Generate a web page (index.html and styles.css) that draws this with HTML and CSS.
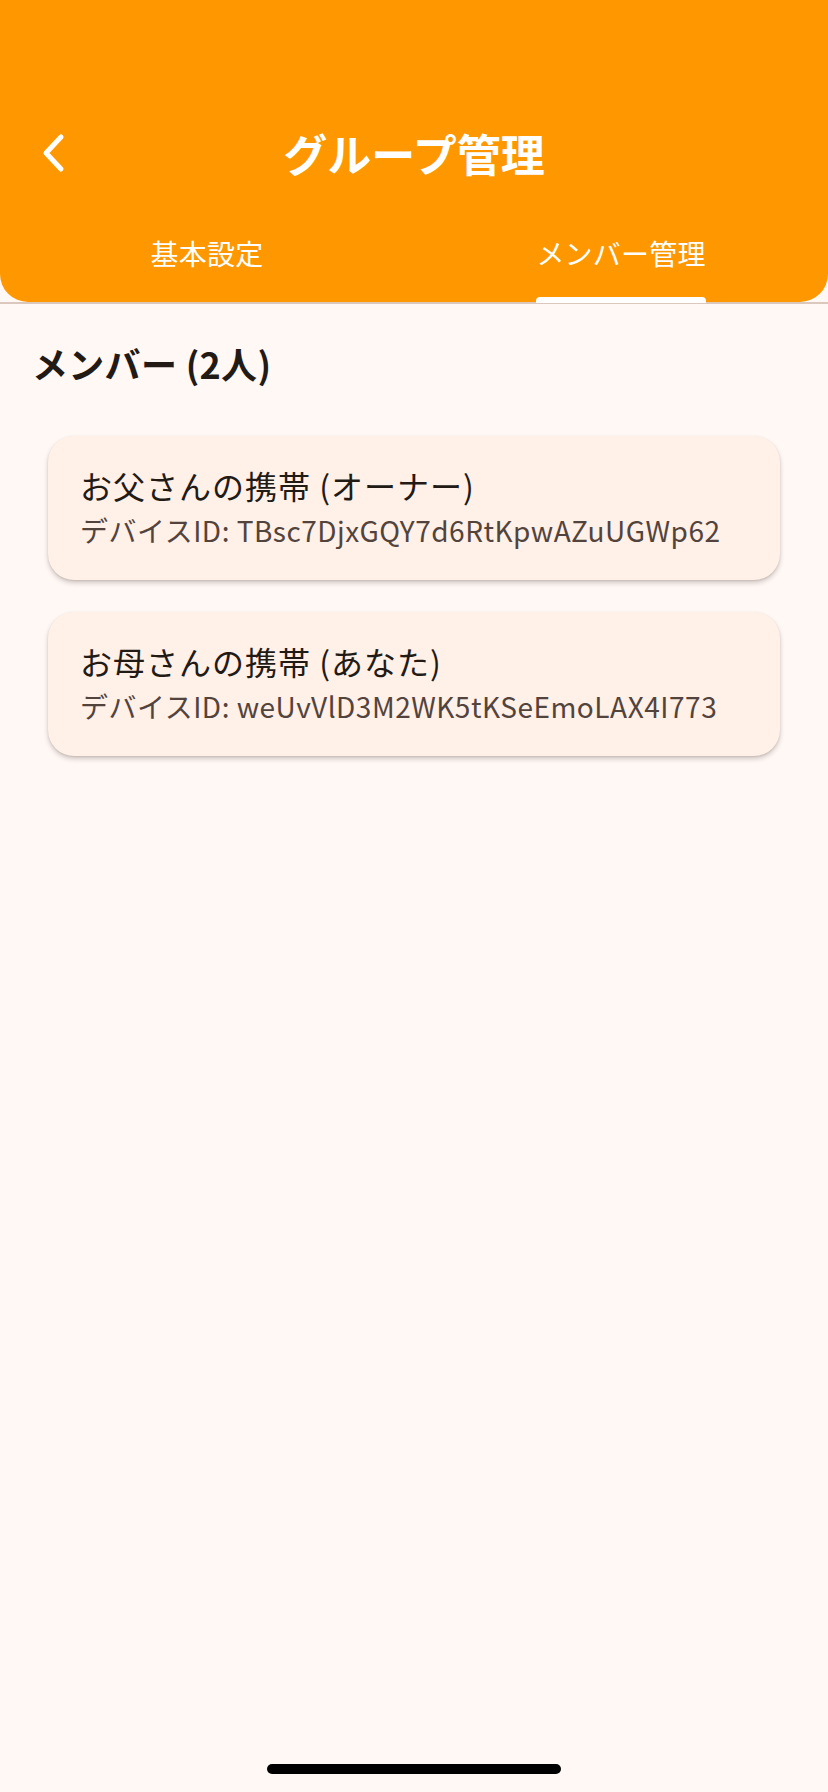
FILE: index.html
```html
<!DOCTYPE html>
<html lang="ja">
<head>
<meta charset="utf-8">
<title>グループ管理</title>
<link rel="stylesheet" href="styles.css">
</head>
<body>
<div class="screen">
  <header class="appbar">
    <div class="status-space"></div>
    <div class="toolbar">
      <div class="back">
        <svg width="30" height="44" viewBox="0 0 30 44" aria-hidden="true">
          <path d="M21 6 L6 22 L21 38" fill="none" stroke="#ffffff" stroke-width="5" stroke-linecap="round" stroke-linejoin="round"/>
        </svg>
      </div>
      <h1 class="title">グループ管理</h1>
      <div class="spacer"></div>
    </div>
    <nav class="tabs">
      <div class="tab"><span class="tab-label">基本設定</span></div>
      <div class="tab active"><span class="tab-label">メンバー管理<span class="indicator"></span></span></div>
    </nav>
  </header>
  <div class="divider"></div>
  <main class="content">
    <h2 class="section-title">メンバー (2人)</h2>
    <ul class="members">
      <li class="card">
        <div class="card-title">お父さんの携帯 (オーナー)</div>
        <div class="card-sub">デバイスID: TBsc7DjxGQY7d6RtKpwAZuUGWp62</div>
      </li>
      <li class="card">
        <div class="card-title">お母さんの携帯 (あなた)</div>
        <div class="card-sub">デバイスID: weUvVlD3M2WK5tKSeEmoLAX4I773</div>
      </li>
    </ul>
  </main>
  <div class="home-bar"><span class="home-indicator"></span></div>
</div>
</body>
</html>
```

FILE: styles.css
```css
* { box-sizing: border-box; }
html, body {
  margin: 0;
  padding: 0;
  background: #fff8f5;
}
body {
  font-family: "Noto Sans CJK JP", "Noto Sans", sans-serif;
  color: #221a15;
}
.screen {
  width: 828px;
  min-height: 1792px;
  display: flex;
  flex-direction: column;
  background: #fff8f5;
}
.appbar {
  background: #ff9800;
  border-radius: 0 0 28px 28px;
  height: 302px;
  display: flex;
  flex-direction: column;
}
.status-space { height: 98px; }
.toolbar {
  height: 112px;
  display: grid;
  grid-template-columns: 1fr auto 1fr;
  align-items: center;
  padding: 0 40px;
}
.back {
  display: flex;
  align-items: center;
  height: 44px;
}
.back svg { display: block; }
.title {
  margin: 0;
  font-size: 44px;
  font-weight: 700;
  line-height: 1.2;
  color: #ffffff;
  text-align: center;
}
.tabs {
  flex: 1;
  display: grid;
  grid-template-columns: 1fr 1fr;
}
.tab {
  display: flex;
  justify-content: center;
  align-items: stretch;
}
.tab-label {
  position: relative;
  height: 93px;
  padding-top: 23px;
  font-size: 28px;
  line-height: 42px;
  color: #ffffff;
  font-weight: 400;
  letter-spacing: 0.2px;
}
.indicator {
  position: absolute;
  left: 0;
  right: 0;
  bottom: -1px;
  height: 6px;
  background: #ffffff;
  border-radius: 4px 4px 0 0;
}
.divider {
  height: 2px;
  background: #dcc7bc;
}
.content {
  padding: 32px 32px 0;
}
.section-title {
  margin: 0;
  font-size: 36px;
  line-height: 54px;
  font-weight: 700;
  color: #221a15;
  letter-spacing: 0.3px;
}
.members {
  list-style: none;
  margin: 46px 16px 0;
  padding: 0;
  display: flex;
  flex-direction: column;
  gap: 32px;
}
.card {
  background: #fff0e8;
  border-radius: 26px;
  padding: 25px 32px 29px;
  box-shadow: 0 3px 5px rgba(60, 40, 30, 0.22), 0 1px 2px rgba(60, 40, 30, 0.12);
}
.card-title {
  font-size: 32px;
  line-height: 48px;
  color: #221a15;
  letter-spacing: 1px;
}
.card-sub {
  font-size: 28px;
  line-height: 42px;
  color: #52443c;
  letter-spacing: 0.5px;
}
.home-bar {
  margin-top: auto;
  height: 42px;
  display: flex;
  justify-content: center;
  padding-top: 14px;
}
.home-indicator {
  width: 294px;
  height: 10px;
  border-radius: 5px;
  background: #000000;
}
```
